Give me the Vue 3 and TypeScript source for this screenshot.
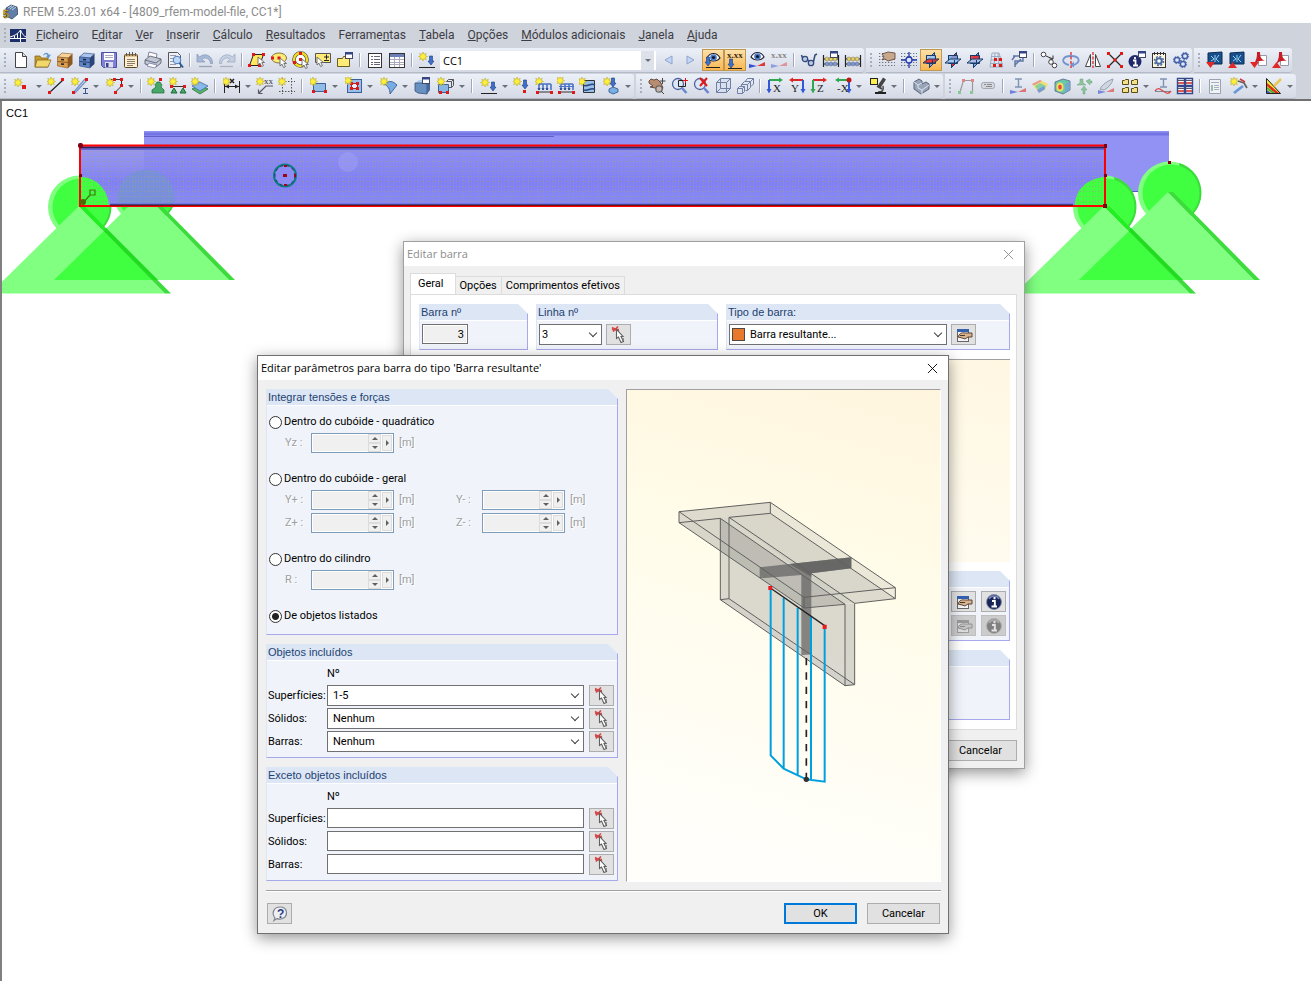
<script setup lang="ts">
import { ref } from 'vue'

interface Item {
  kind: 'button' | 'separator' | 'combo'
  icon: string
  label: string
  menu: boolean
  active: boolean
}

const b = (icon: string, label: string, active = false): Item => ({ kind: 'button', icon, label, menu: false, active })
const m = (icon: string, label: string): Item => ({ kind: 'button', icon, label, menu: true, active: false })
const sep: Item = { kind: 'separator', icon: '', label: '', menu: false, active: false }
const combo: Item = { kind: 'combo', icon: '', label: '', menu: false, active: false }

// Shared pieces of the toolbar glyphs
const star = (x = 0, y = 0) =>
  `<path transform="translate(${x} ${y})" d="M4 0l.9 2.400 2.400-1.100-1.100 2.300 2.300.9-2.300.9 1.100 2.300-2.400-1L4 9l-.9-2.300-2.400 1 1.100-2.300L-.5 4.500l2.300-.9L.7 1.300l2.400 1.100z" fill="#fff03c" stroke="#b0a020" stroke-width=".5"/>`
const node = (x: number, y: number, c = '#e01818') => `<rect x="${x}" y="${y}" width="3" height="3" fill="${c}"/>`
const down = (x: number, y: number, c = '#3c70cc') =>
  `<path transform="translate(${x} ${y})" d="M-1.500 0h3v5h1.500l-3 4-3-4h1.500z" fill="${c}" stroke="#1c3c7c" stroke-width=".6"/>`
const cursor = (x: number, y: number) =>
  `<path transform="translate(${x} ${y})" d="M0 0v8l2-1.800 1.600 3.300 1.800-.8L3.800 5.500h2.700z" fill="#fff" stroke="#666" stroke-width=".9"/>`
const windowGlyph = (x: number, y: number) =>
  `<g transform="translate(${x} ${y})"><rect x=".5" y=".5" width="7" height="6" fill="#fff" stroke="#444a66"/><path d="M0 1.500h8" stroke="#34448c" stroke-width="2"/></g>`
const lens = `<circle cx="8" cy="7" r="5.500" fill="#dbe8f8" stroke="#52629a" stroke-width="1.300"/><path d="M12 11l4.500 5" stroke="#6a88d0" stroke-width="2.600"/>`
const crate = (a: string, c: string, e: string) =>
  `<path d="M1.500 6L6 2l10.500 1L12 7z" fill="${a}" stroke="${e}" stroke-width=".6"/><path d="M1.500 6L12 7v10L1.500 15z" fill="${c}" stroke="${e}" stroke-width=".6"/><path d="M12 7l4.500-4v10L12 17z" fill="${e}"/><path d="M1.500 10.500l10.500 1" stroke="${e}"/><path d="M5 8.500l3 .3M5 13l3 .3" stroke="#222" stroke-width="1.500"/>`
const dots = `<path d="M1 2.500h16M1 5.500h16M1 8.500h16M1 11.500h16M1 14.500h16" stroke="#6b7280" stroke-width="1.200" stroke-dasharray="1.300 1.700"/>`
const planes = (flat: string, side: string, face: string) =>
  `<path d="M7.500 6.500l5-5v10l-5 5z" fill="${side}" stroke="#173a6a"/><path d="M4.500 4.500h9v8h-9z" fill="${face}" fill-opacity=".85" stroke="#173a6a"/><path d="M1 12l5-4h11l-5 4z" fill="${flat}" fill-opacity=".9" stroke="#173a6a"/><path d="M7.500 12v4.500l3-3V9M4.500 8V4.500h5" fill="none" stroke="#173a6a"/>`
const abacus = `<path d="M1.500 4v12M16.500 4v12M1 8h16M1 13h16" stroke="#222" stroke-width="1.200"/><g stroke="#555" stroke-width=".4"><circle cx="5" cy="8" r="2" fill="#e8d060"/><circle cx="9" cy="8" r="2" fill="#e8d060"/><circle cx="13" cy="8" r="2" fill="#e8d060"/><circle cx="5" cy="13" r="2" fill="#7c98d8"/><circle cx="9" cy="13" r="2" fill="#7c98d8"/><circle cx="13" cy="13" r="2" fill="#7c98d8"/></g>`
const eye = (x: number, y: number) =>
  `<g transform="translate(${x} ${y})"><path d="M0 5c3-6 10-6 13 0-3 4-10 4-13 0z" fill="#fff" stroke="#223" stroke-width="1.200"/><circle cx="6.500" cy="4.500" r="3.300" fill="#4c7cc8"/><circle cx="6.500" cy="4.500" r="1.600" fill="#101828"/></g>`
const wedge = (o = 1) => `<g opacity="${o}"><path d="M1 17v-4l8 2z" fill="#3850d0"/><path d="M9 15l8-4v4z" fill="#e03838"/></g>`
const xxx = (c: string) => `<text x="1" y="7" font-family="Liberation Serif, serif" font-size="9" font-weight="bold" fill="${c}">x.xx</text>`
const loads = `<path d="M4 7v6M8 7v6M12 7v6M16 7v6M4 7h12" stroke="#4c74c4" stroke-width="1.600" fill="none"/><path d="M3 11l1 2 1-2M7 11l1 2 1-2M11 11l1 2 1-2" stroke="#24448c" fill="none"/><path d="M2 15h15" stroke="#333"/>` + node(1, 14) + node(15, 14)
const axis = (h: string, v: string, t: string, flip = false) =>
  `<path d="${flip ? 'M15 3H4' : 'M3 3h11'}" stroke="${h}" stroke-width="2"/><path d="${flip ? 'M5 .5v5L1 3z' : 'M13 .5v5L17 3z'}" fill="${h}"/><path d="${flip ? 'M15 3v10' : 'M3 3v10'}" stroke="${v}" stroke-width="2"/><path d="${flip ? 'M12.500 12h5L15 16.500z' : 'M.5 12h5L3 16.500z'}" fill="${v}"/><text x="${flip ? 3 : 7}" y="15" font-family="Liberation Serif, serif" font-size="11" fill="#222">${t}</text>`
const beamI = `<path d="M6 2h7M9.500 2v8M6 10h7" stroke="#8094b4" stroke-width="1.400"/>`
const gear = (x: number, y: number) =>
  `<circle cx="${x}" cy="${y}" r="2.600" fill="#dfe8f8" stroke="#4460a8" stroke-width="1.500"/><circle cx="${x}" cy="${y}" r="3.600" fill="none" stroke="#4460a8" stroke-width="1" stroke-dasharray="1.400 1.400"/>`
const screen = `<path d="M2 2l14-1v12H2z" fill="#18508c" stroke="#0c2c54"/><path d="M5 5l3 3-3 2M13 4l-3 4 3 3M9 4v7" stroke="#9cd0f4" fill="none"/>`
const pdf = `<path d="M8.500 4.500h8v10h-8z" fill="#fff" stroke="#99a"/><path d="M7 1h3c0 5 1 7 5 9-4-1-8 0-11 3 3-5 3-8 3-12z" fill="#c81c24"/>`
const upTip = `<path d="M0 17h9l-4.500-6z" fill="#e02828"/>`
const downTip = `<path d="M0 11h9l-4.500 6z" fill="#e02828"/>`

const icons: Record<string, string> = {
  file: `<path d="M3.500 1.500h7l4 4v11h-11z" fill="#fff" stroke="#444"/><path d="M10.500 1.500v4h4" fill="#ddd" stroke="#444"/>`,
  open: `<path d="M1 5h5l1 2h7v9H1z" fill="#c79a2c" stroke="#7c5c14" stroke-width=".7"/><path d="M3 9h14l-3 7H1z" fill="#f2d86c" stroke="#7c5c14" stroke-width=".7"/><path d="M9 5c1-4 5-4 6-1l2-.5-2.500 4L12 5l1.500-.5C13 3 11 2.500 9 5z" fill="#5e94d0"/>`,
  crate: crate('#f4d49c', '#dca050', '#8a5820'),
  crateBlue: crate('#a8c4ec', '#5c84c8', '#2c4478'),
  save: `<path d="M1.500 1.500h15v15h-13l-2-2z" fill="#8080d4" stroke="#5050a0"/><rect x="4" y="2" width="10" height="7" fill="#fff"/><path d="M5 4.500h8M5 6.500h8" stroke="#aab"/><rect x="5" y="11" width="8" height="5.500" fill="#dde"/><rect x="6" y="12" width="2.500" height="4" fill="#404090"/>`,
  clip: `<rect x="2.500" y="3.500" width="13" height="13" rx="1" fill="#fcefd4" stroke="#5c4420"/><path d="M3 4.500h12" stroke="#c89c5c" stroke-width="2"/><path d="M4.500 2v3M7.500 1v4M10.500 1v4M13.500 2v3" stroke="#555"/><path d="M5 8.500h8M5 10.500h8M5 12.500h8M5 14.500h6" stroke="#8b7c64"/>`,
  print: `<path d="M5 1l8 2-1 5-8-2z" fill="#fff" stroke="#668" stroke-width=".8"/><path d="M1 9l5-4 11 3v4l-5 4L1 13z" fill="#c0c8d6" stroke="#556" stroke-width=".8"/><path d="M1 9l11 3 5-4" fill="none" stroke="#556" stroke-width=".8"/><path d="M5 12l8 2-2 3-8-2z" fill="#fff" stroke="#77a" stroke-width=".8"/>`,
  preview: `<path d="M2.500 1.500h9l3 3v12h-12z" fill="#eef1f8" stroke="#555"/><path d="M4 4.500h6M4 7.500h4M4 10.500h4M4 13.500h6" stroke="#99a"/><circle cx="11" cy="9" r="3.800" fill="#bcd8f8" stroke="#4c7cb8"/><path d="M13.500 12l3.500 4.500" stroke="#2c5ca0" stroke-width="2"/>`,
  undo: `<path d="M1 3v8h8L6 8.500c3-3 8-1 8.500 4h2C17 5 9 1 3.500 6z" fill="#a6b8d6" stroke="#8496b4" stroke-width=".7"/><path d="M3 15.500h13" stroke="#98a4b8" stroke-width="1.300"/>`,
  redo: `<path d="M17 3v8H9l3-2.500c-3-3-8-1-8.500 4h-2C1 5 9 1 14.500 6z" fill="#c4d0e2" stroke="#98a6bc" stroke-width=".7"/><path d="M2 15.500h13" stroke="#a8b2c2" stroke-width="1.300"/>`,
  para: `<path d="M5.500 3.500h10l-4 11h-10z" fill="#ffe860" stroke="#222"/>` + node(4, 2) + node(14, 2) + node(0, 13) + node(10, 13) + cursor(10, 6),
  ellipse: `<ellipse cx="9" cy="7" rx="7.500" ry="5" fill="#ffec78" stroke="#665c20" stroke-width=".8"/>` + node(7.500, 5.500) + node(1, 5.500) + cursor(10, 7),
  ring: `<circle cx="8.500" cy="8.500" r="6.500" fill="#fff" stroke="#444" stroke-width="3.600"/><circle cx="8.500" cy="8.500" r="6.500" fill="none" stroke="#f4dc20" stroke-width="2.400"/>` + node(7, 7) + node(7, 1) + node(1, 10) + cursor(10, 8),
  pm: `<path d="M1.500 2.500h15v9h-15z" fill="#ffec78" stroke="#555"/><path d="M10 6h5M12.500 3.500v5M10 9.500h5" stroke="#222"/>` + cursor(3, 6),
  folder: `<path d="M1.500 7.500h5l1-2h6v10h-12z" fill="#ffec78" stroke="#6b5c20"/>` + windowGlyph(9, 1),
  list: `<rect x="2.500" y="2.500" width="13" height="14" fill="#fff" stroke="#333"/><path d="M5 5.500h2M8 5.500h6M5 8.500h2M8 8.500h6M5 11.500h2M8 11.500h6M5 13.500h2M8 13.500h6" stroke="#667"/>`,
  table: `<rect x="1.500" y="2.500" width="15" height="14" fill="#fff" stroke="#333"/><path d="M2 4.500h14" stroke="#6c80b8" stroke-width="3"/><path d="M2 8.500h14M2 11.500h14M2 13.500h14M6.500 6v10M11.500 6v10" stroke="#aab"/>`,
  load: star(1, 1) + down(13, 5) + `<path d="M1 16.500h16" stroke="#222"/>`,
  prev: `<path d="M12 5v8L5 9z" fill="#c4d6f4" stroke="#8ca6d0"/>`,
  next: `<path d="M5 5v8l7-4z" fill="#c4d6f4" stroke="#8ca6d0"/>`,
  eyeload: eye(3, 2) + down(4, 6) + `<path d="M2 16.500h14" stroke="#222"/>`,
  xload: xxx('#3a2c14') + down(5, 8) + `<path d="M2 17.500h14" stroke="#222"/>`,
  eyewedge: eye(3, 1) + wedge(),
  xwedge: xxx('#888') + wedge(0.45),
  glasses: `<g fill="#b8cce8" stroke="#34487c" stroke-width="1.300"><circle cx="5" cy="8" r="2.700"/><circle cx="11" cy="12" r="2.700"/></g><path d="M2.500 7L1.500 4M13.500 10.500L15 4l2-1M7.500 9l1.500 1" stroke="#34487c" stroke-width="1.500" fill="none"/>`,
  abacusWin: abacus + windowGlyph(8, 0),
  abacus,
  handdots: dots + `<path d="M4 3l6-2 7 1v6l-7 2-3-2-3 1 2-3z" fill="#c8a88c" stroke="#5c4030" stroke-width=".8"/>`,
  stardots: dots + `<path d="M9 1v16M1 9h16" stroke="#2038a8" stroke-width="1.300"/><circle cx="9" cy="9" r="3" fill="#dfe6ff" stroke="#2038a8" stroke-width="1.300"/>`,
  plane1: planes('#f02828', '#78a8e4', '#a8cdf4'),
  plane2: planes('#a8cdf4', '#f02828', '#78a8e4'),
  plane3: planes('#a8cdf4', '#78a8e4', '#f02828'),
  grid: `<path d="M4 2h7l4 14H2zM3 9h11M7 2l-1 14M10 2l1 14M3.500 5.500h9M2.500 12.500h12" fill="none" stroke="#8ca0b8" stroke-width=".8"/>` + node(6, 7) + node(11, 7) + node(5, 13) + node(11, 13),
  snapwin: `<path d="M3 5h10v5H5v6M2 9l3-4M5 14l6-6" stroke="#6078a8" stroke-width="1.500" fill="none"/>` + windowGlyph(9, 0),
  copy: `<g fill="#fff" stroke="#444"><circle cx="3.500" cy="3.500" r="2.300"/><circle cx="11" cy="11" r="2.300"/><circle cx="14.500" cy="14.500" r="2.300"/></g><path d="M6 5l7 3M13 8V4.500M13 8H9.500" stroke="#333" fill="none"/>`,
  rotate: `<path d="M7 14C-2 12 0 5 9 5s10 6 3 9" stroke="#7494d0" stroke-width="1.800" fill="none"/><path d="M12 10.500v6l-4-2.500z" fill="#7494d0"/><path d="M9 1v16" stroke="#e01818" stroke-width="1.200" stroke-dasharray="3 1.500"/>`,
  mirror: `<path d="M6.500 3.500v12h-5zM11.500 3.500v12h5z" fill="#fff" stroke="#444"/><path d="M9 1v16" stroke="#e01818" stroke-width="1.200" stroke-dasharray="3 1.500"/>`,
  cross: `<path d="M3 3l12 12M15 3L3 15" stroke="#222" stroke-width="1.200"/>` + node(1, 1) + node(14, 1) + node(1, 14) + node(14, 14) + node(7.500, 7.500),
  infoWin: `<circle cx="7" cy="10.500" r="6.500" fill="#20286c"/><path d="M7 6v2M5 9.500h2.500V14M5 14.500h5" stroke="#fff" stroke-width="1.800"/>` + windowGlyph(10, 0),
  gearfile: `<rect x="2.500" y="2.500" width="13" height="14" fill="#fff6e0" stroke="#333"/><path d="M4.500 4V1M7.500 4V1M10.500 4V1M13.500 4V1" stroke="#333"/><circle cx="9" cy="10" r="2.800" fill="#fff" stroke="#4c6ca0" stroke-width="2"/><circle cx="9" cy="10" r="4.500" fill="none" stroke="#4c6ca0" stroke-width="1.500" stroke-dasharray="2 1.500"/>`,
  gears: gear(5, 9) + gear(13, 5) + gear(11, 13),
  screenDown: screen + downTip,
  screenUp: screen + upTip,
  pdfDown: pdf + downTip,
  pdfUp: pdf + upTip,
  point: star(0, 1) + `<rect x="8" y="8" width="4" height="4" fill="#e01818"/>`,
  line: `<path d="M2 16L16 3" stroke="#222" stroke-width="1.200"/>` + star(0, 0) + node(14, 1) + node(1, 14),
  member: `<path d="M2 16L14 2M4 16L16 3" stroke="#7494c8" stroke-width="1.200"/>` + star(0, 0) + node(14, 1) + node(1, 14) + `<path d="M12 11.500h5M14.500 11v5M12 16.500h5" stroke="#3c5488"/>`,
  poly: `<path d="M5 2.500h10.500V9l-6 6" stroke="#333" fill="none"/>` + star(0, 1) + node(7, 1) + node(14, 1) + node(14, 7) + node(8, 14),
  support: star(0, 0) + node(12, 1) + `<path d="M8 8l2-3h3l2 3-1 2 3 3v3H5v-3l4-3z" fill="#48a868" stroke="#1c6838" stroke-width=".7"/>`,
  support2: `<path d="M3 9.500h13" stroke="#333"/>` + star(0, 0) + node(1, 8) + node(14, 8) + `<path d="M5 11l3 5H2zM14 11l3 5h-6z" fill="#48a868" stroke="#1c6838"/>`,
  surf: `<path d="M1 12l8-4 8 4-8 5z" fill="#58b868" stroke="#206030" stroke-width=".7"/><path d="M1 9l8-4 8 4-8 5z" fill="#88b8ec" stroke="#3c6098" stroke-width=".7"/>` + star(0, 0),
  dim: `<path d="M1.500 4v12M16.500 4v12M2 9.500h14" stroke="#222"/><path d="M2 9.500l4-2v4zM16 9.500l-4-2v4z" fill="#222"/><path d="M7 2l4 4M11 2L7 6" stroke="#222" stroke-width="1.500"/>` + star(-1, 0),
  note: star(0, 0) + `<text x="8" y="7" font-family="Liberation Serif, serif" font-size="9" fill="#333">xx</text><path d="M17 9h-7l-7 7M2.500 16.500v-4M2.500 16.500h4" stroke="#556" stroke-width="1.200" fill="none"/>`,
  guide: `<path d="M4.500 1v16M13.500 1v16M1 4.500h16M1 14.500h16" stroke="#555" stroke-dasharray="1.500 1.500"/>` + star(0, 0),
  rect: `<path d="M3.500 6.500h12v8h-12z" fill="#90bce8" stroke="#3c6098"/>` + star(-1, 0) + node(14, 13) + node(2, 13),
  opening: `<rect x="2.500" y="2.500" width="14" height="13" fill="#98c0ec" stroke="#3c6098"/><rect x="6.500" y="6.500" width="6" height="5" fill="#e8eef8" stroke="#b02020"/>` + node(5, 5) + node(11, 5) + node(5, 10) + node(11, 10) + star(-1, -1),
  sector: `<path d="M4 7c5-4 9-3 13 1l-7 9C10 12 8 9 4 7z" fill="#78ace4" stroke="#2c5088" stroke-width=".8"/>` + star(0, 0),
  box: `<path d="M2 6l4-3h11l-3 3z" fill="#b0ccec"/><path d="M2 6h12v11l-9-1-3-2z" fill="#6890c0" stroke="#34507c" stroke-width=".8"/><path d="M14 6l3-3v10l-3 4z" fill="#44689c"/>` + windowGlyph(9, 0),
  boxes: `<path d="M1.500 7.500h10v8h-10z" fill="#88b4e4" stroke="#3c6098"/><path d="M9.500 4.500l2-2h5v6l-2 2h-3M9.500 4.500h5v6M14.500 4.500l2-2" fill="none" stroke="#555"/>` + star(0, 0) + node(9, 14) + node(2, 14),
  nodeload: star(0, 0) + down(12, 3) + node(10, 13),
  lineload: star(0, 0) + loads,
  memload: loads + star(-1, -1) + `<path d="M2 9.500h15" stroke="#4c74c4"/>`,
  surfload: `<path d="M4.500 3.500h11v12h-11z" fill="#98c0ec" stroke="#333"/><path d="M4 8c4 3 8-3 12 0M4 12.500c4 3 8-3 12 0" fill="none" stroke="#28457e" stroke-width="1.400"/>` + star(-1, 0),
  freeload: star(0, 0) + down(10, 1) + `<path d="M6 12l4-2 5 2v3l-5 2-4-2z" fill="#78b0e4" stroke="#2c5088" stroke-width=".8"/>`,
  pan: `<path d="M1 4l2-2 3 1 3-1 4 4 2 5-3 4-5-4-5-1 3-1-4-3z" fill="#b88c70" stroke="#4c3424" stroke-width=".8"/><circle cx="11" cy="12" r="3.200" fill="#e4e8f0" fill-opacity=".5" stroke="#666" stroke-width="1.300"/><path d="M14.500 1v6M11.500 4h6M13 14l3 3" stroke="#444"/>`,
  zoomWin: lens + `<path d="M8.500 3.500h7v6h-7z" fill="none" stroke="#222"/><path d="M15.500 1v5M13 3.500h5" stroke="#e01818"/>`,
  zoomDel: lens + `<path d="M8 1l7 8M15 1L8 9" stroke="#e01818" stroke-width="2"/>`,
  cube: `<path d="M2.500 5.500l4-4h10v10l-4 4h-10zM2.500 5.500h10v10M12.500 5.500l4-4M6.500 1.500v10l-4 4M6.500 11.500h10" fill="#d4dcec" fill-opacity=".6" stroke="#7080a4"/>`,
  cubes: `<path d="M1.500 11.500h5v5h-5zM1.500 11.500l2-2h5v5l-2 2M6.500 11.500l2-2" fill="#dfe5f0" stroke="#7080a4"/><path d="M9.500 13.500h2v-6h-6v2M5.500 7.500l3-3h6v6l-3 3M11.500 7.500l3-3M15 9.500l2.500-2.500V1.500h-6l-2 2.500M14.500 4.500l3-3" fill="none" stroke="#7080a4"/>`,
  ax: axis('#30a850', '#3058d8', 'X'),
  ay: axis('#d82828', '#3058d8', 'Y', true),
  az: axis('#d82828', '#30a850', 'Z'),
  axn: axis('#30a850', '#3058d8', '-X', true) + `<circle cx="15" cy="3" r="2.500" fill="#c01818"/>`,
  scope: `<rect x="1.500" y="1.500" width="7" height="6" fill="#ffee50" stroke="#222"/><path d="M15.500 1.500L10 10" stroke="#444" stroke-width="3.500"/><path d="M8 9l5 3" stroke="#444" stroke-width="2"/><path d="M9 15c4 0 6-1 5-6" stroke="#444" stroke-width="1.500" fill="none"/><path d="M6 16h11" stroke="#222" stroke-width="2"/>`,
  solid: `<path d="M2 5l5-3 3 2v3l4-2 3 2v5l-8 5-7-5z" fill="#98a4b8" stroke="#58647c"/><path d="M2 5l4 3v3l4 2 7-5M10 13v4M6 8l4-2" fill="none" stroke="#dde3ee"/>`,
  frame: `<path d="M3 15L6.500 3.500h9v12" fill="none" stroke="#999" stroke-width="1.200"/>` + node(5, 2, '#e08888') + node(14, 2, '#e08888') + node(1, 14, '#88c898') + node(13, 14, '#88c898'),
  tag: `<rect x="2.500" y="5.500" width="13" height="6" rx="2" fill="#d4d8de" stroke="#a4a8b0"/><path d="M5 7.500h2M8 7.500h5M7 9.500h6" stroke="#888"/>`,
  beamw: beamI + wedge(0.65),
  rainbow: `<path d="M1 7l8-4 8 4-3 6-6 3z" fill="#f0e070"/><path d="M4 9l5-3 6 3-2 4-5 2z" fill="#88d0a0"/><path d="M1 7l8-4 2 1-8 4.500z" fill="#e89898"/><path d="M6 13l7-4 1 3-6 4z" fill="#7898e0"/>`,
  isobox: `<path d="M2 5l8-3 7 2v9l-7 4-8-3z" fill="#68c8a8" stroke="#568" stroke-width=".8"/><ellipse cx="7" cy="10" rx="3.500" ry="4.500" fill="#f0e060"/><ellipse cx="7" cy="10" rx="1.800" ry="2.500" fill="#e84838"/><path d="M12 16V7l5-3v9z" fill="#78a0d8" fill-opacity=".7"/>`,
  react: `<path d="M5 2h3v4l3 2H2l3-2zM11 4l4-2v2h2v2h-2v2zM8 17v-4H6l3-4 3 4h-2v4z" fill="#8cc49c" stroke="#6ca47c" stroke-width=".5"/>`,
  pencilw: `<path d="M3 12c2-4 7-8 13-10-1 5-5 9-9 11z" fill="#d0d6e0" stroke="#98a2b2"/>` + wedge(0.6),
  folders: `<g fill="#f4e088" stroke="#5c4c14"><path d="M1.500 3.500h2l1-1h3v5h-6zM10.500 3.500h2l1-1h3v5h-6zM1.500 11.500h2l1-1h3v5h-6zM10.500 11.500h2l1-1h3v5h-6z"/></g>`,
  beams: beamI + `<path d="M1 14.500h16" stroke="#789"/><path d="M1 14c3-4 5-2 8 0s5 4 8 0" fill="none" stroke="#d84848" stroke-width="1.300"/>`,
  panels: `<g fill="#fff" stroke="#34488c" stroke-width="1.400"><path d="M1.500 1.500h7v7h-7zM9.500 1.500h7v7h-7zM1.500 9.500h7v7h-7zM9.500 9.500h7v7h-7z"/></g><path d="M2 6h6M10 6h6M2 14h6M10 14h6" stroke="#d02828" stroke-width="1.300"/><path d="M2 3.500h6M10 3.500h6M2 11.500h6M10 11.500h6" stroke="#556"/>`,
  report: `<path d="M3.500 2.500h11v14h-11z" fill="#f0f2f6" stroke="#9aa2b0"/><path d="M5 5.500h8M8 8.500h5M8 10.500h5M8 12.500h5" stroke="#a8b0c0"/><path d="M5 8h2v6H5z" fill="#98c0a8"/>`,
  tools: star(0, 0) + `<path d="M4 16L13 9" stroke="#6898d8" stroke-width="2.800"/><path d="M8 4l6 2 3 5" fill="none" stroke="#666" stroke-width="1.800"/><path d="M10 2l5 3" stroke="#d03838" stroke-width="1.500"/>`,
  colors: `<path d="M1.500 1.500v15h14z" fill="#f8e828" stroke="#222"/><path d="M2 6v3l8 7h4z" fill="#e02828"/><path d="M2 10v2l5 4h3z" fill="#38b038"/><path d="M2 13v3h4z" fill="#3858d8"/><path d="M9 9l7-7" stroke="#e8c858" stroke-width="2.500"/>`,
  pick: `<path d="M2 1.500l7 4M3 5.500l5-5M2 3.500h7" stroke="#d84848" stroke-width="1.600"/><path d="M6.500 3.500v9l2-1.500 2.500 5.500 2.500-1-2.500-5h2z" fill="#fff" stroke="#606060" stroke-width="1.100"/><path d="M13 12v3" stroke="#777" stroke-width="1.500"/>`,
  edit: `<rect x="2.500" y="3.500" width="11" height="12" fill="#f4f4f4" stroke="#666"/><path d="M2 4.500h12" stroke="#3460b0" stroke-width="3"/><path d="M4 9c2-3 5-2 7-2h6v4h-4l-3 2-3-1-4-1z" fill="#d8b490" stroke="#4c3828" stroke-width=".9"/><path d="M5 9.500h5" stroke="#4c3828"/>`,
  info: `<circle cx="9" cy="9" r="7.500" fill="#182458" stroke="#8890a8"/><path d="M4 6c2-4 8-4 10 0" stroke="#7888c0" stroke-width="1.500" fill="none"/><path d="M9.500 4v2.300M7 8h2.800v5M6.500 13.500h5.500" stroke="#fff" stroke-width="2"/>`,
  help: `<path d="M3 15.500L4 13C0 8 3 2 9 2c8 0 9 10 1 12-2 .4-3 0-4-.4z" fill="#eceff5" stroke="#80848c" stroke-width="1.200"/><text x="6" y="12.500" font-family="Liberation Sans, sans-serif" font-size="12" font-weight="bold" fill="#2c3c7c">?</text>`,
}

const menus: [string, string, string][] = [
  ['', 'F', 'icheiro'], ['E', 'd', 'itar'], ['', 'V', 'er'], ['', 'I', 'nserir'], ['', 'C', 'álculo'],
  ['', 'R', 'esultados'], ['Ferrame', 'n', 'tas'], ['', 'T', 'abela'], ['', 'O', 'pções'],
  ['', 'M', 'ódulos adicionais'], ['', 'J', 'anela'], ['', 'A', 'juda'],
]

const toolbars: Item[][][] = [
  [
    [
      b('file', 'Novo'), b('open', 'Abrir'), b('crate', 'Bloco'), b('crateBlue', 'Guardar bloco'), b('save', 'Guardar'),
      b('clip', 'Dados gerais'), b('print', 'Imprimir'), b('preview', 'Pré-visualizar'), sep,
      b('undo', 'Desfazer'), b('redo', 'Refazer'), sep,
      b('para', 'Seleção losango'), b('ellipse', 'Seleção elipse'), b('ring', 'Seleção anel'), b('pm', 'Seleção especial'), b('folder', 'Grupos'), sep,
      b('list', 'Navegador'), b('table', 'Tabelas'), sep, b('load', 'Casos de carga'), combo,
      b('prev', 'Anterior'), b('next', 'Seguinte'), b('eyeload', 'Mostrar cargas', true), b('xload', 'Valores das cargas', true),
      b('eyewedge', 'Mostrar resultados'), b('xwedge', 'Valores dos resultados'), sep,
      b('glasses', 'Verificar'), b('abacusWin', 'Calcular seleção'), b('abacus', 'Calcular tudo'),
    ],
    [
      b('handdots', 'Plano de trabalho'), b('stardots', 'Grelha'), b('plane1', 'Plano XY', true), b('plane2', 'Plano YZ'),
      b('plane3', 'Plano XZ'), b('grid', 'Malha'), b('snapwin', 'Encaixe'), sep,
      b('copy', 'Copiar'), b('rotate', 'Rodar'), b('mirror', 'Espelhar'), b('cross', 'Intersetar'),
      b('infoWin', 'Informação'), b('gearfile', 'Propriedades'), b('gears', 'Configuração'),
    ],
    [b('screenDown', 'Importar'), b('screenUp', 'Exportar'), b('pdfDown', 'Importar PDF'), b('pdfUp', 'Exportar PDF')],
  ],
  [
    [
      m('point', 'Nó'), b('line', 'Linha'), m('member', 'Barra'), m('poly', 'Polilinha'), sep,
      b('support', 'Apoio nodal'), b('support2', 'Apoio de linha'), b('surf', 'Apoio de superfície'), sep,
      m('dim', 'Cota'), b('note', 'Comentário'), b('guide', 'Linha guia'), sep,
      m('rect', 'Superfície'), m('opening', 'Abertura'), m('sector', 'Superfície curva'), b('box', 'Sólido'), m('boxes', 'Conjunto'), sep,
      m('load', 'Carga'), b('nodeload', 'Carga nodal'), b('lineload', 'Carga de linha'), b('memload', 'Carga de barra'),
      b('surfload', 'Carga de superfície'), m('freeload', 'Carga livre'),
    ],
    [
      b('pan', 'Mover vista'), b('zoomWin', 'Ampliar janela'), b('zoomDel', 'Vista anterior'), b('cube', 'Vista isométrica'), b('cubes', 'Perspetiva'), sep,
      b('ax', 'Vista X'), b('ay', 'Vista Y'), b('az', 'Vista Z'), m('axn', 'Vista -X'), m('scope', 'Visibilidade'), sep, m('solid', 'Modo de exibição'),
    ],
    [
      b('frame', 'Deformação'), b('tag', 'Rótulos'), sep,
      b('beamw', 'Esforços na barra'), b('rainbow', 'Esforços na superfície'), b('isobox', 'Tensões no sólido'), b('react', 'Reações'),
      b('pencilw', 'Secção'), m('folders', 'Janelas'), b('beams', 'Diagrama'), b('panels', 'Painéis'), sep,
      b('report', 'Relatório'), m('tools', 'Ferramentas'), m('colors', 'Cores'),
    ],
  ],
]

type Field = { id: string; label: string }
const modes: { id: string; label: string; rows: Field[][] }[] = [
  { id: 'quad', label: 'Dentro do cubóide - quadrático', rows: [[{ id: 'yz', label: 'Yz :' }]] },
  {
    id: 'geral',
    label: 'Dentro do cubóide - geral',
    rows: [
      [{ id: 'yp', label: 'Y+ :' }, { id: 'ym', label: 'Y- :' }],
      [{ id: 'zp', label: 'Z+ :' }, { id: 'zm', label: 'Z- :' }],
    ],
  },
  { id: 'cilindro', label: 'Dentro do cilindro', rows: [[{ id: 'r', label: 'R :' }]] },
  { id: 'lista', label: 'De objetos listados', rows: [] },
]
const mode = ref('lista')
const loadCase = ref('CC1')
const included = [
  { id: 'inc-sup', label: 'Superfícies:', value: '1-5' },
  { id: 'inc-sol', label: 'Sólidos:', value: 'Nenhum' },
  { id: 'inc-bar', label: 'Barras:', value: 'Nenhum' },
]
const excluded = [
  { id: 'exc-sup', label: 'Superfícies:' },
  { id: 'exc-sol', label: 'Sólidos:' },
  { id: 'exc-bar', label: 'Barras:' },
]
// Horizontal placement of the two beam ends; each carries a front and a rear support
const supports = [0, 1025]
</script>

<template>
  <div class="app">
    <header class="titlebar">
      <svg class="logo" viewBox="0 0 16 16" aria-hidden="true">
        <path d="M4 4l5-3 6 2 1 7-6 5-6-3z" fill="#5f7fa8" stroke="#26384f" stroke-width=".7" />
        <path d="M6 4l4-2.500M8 5l4-3M10 6l4-3" stroke="#b9d0ea" />
        <text x="1" y="14" font-family="Liberation Sans, sans-serif" font-size="11" font-weight="bold" fill="#f6c830" stroke="#4c3a08" stroke-width=".5">5</text>
      </svg>
      <span>RFEM 5.23.01 x64 - [4809_rfem-model-file, CC1*]</span>
    </header>

    <nav class="menubar">
      <span class="grip"></span>
      <svg class="doc" viewBox="0 0 16 13" aria-hidden="true">
        <rect width="16" height="13" fill="#1d2f6b" />
        <path d="M0 9.500h16M10.500 1v12M0 8c4-1 8-3 10.500-7C12 5 14 7 16 8M4.500 7v3M7.500 5v5" fill="none" stroke="#fff" />
      </svg>
      <button v-for="w in menus" :key="w.join('')" type="button">{{ w[0] }}<u>{{ w[1] }}</u>{{ w[2] }}</button>
    </nav>

    <div class="toolbars">
      <div v-for="(row, r) in toolbars" :key="r" class="toolrow">
        <div v-for="(group, g) in row" :key="g" class="toolgroup">
          <span class="grip"></span>
          <template v-for="(item, i) in group" :key="i">
            <span v-if="item.kind === 'separator'" class="sep"></span>
            <span v-else-if="item.kind === 'combo'" class="combo">
              <select v-model="loadCase" aria-label="Caso de carga"><option>CC1</option></select>
              <i></i>
            </span>
            <button v-else type="button" class="tool" :class="{ active: item.active, menu: item.menu }" :aria-label="item.label">
              <svg viewBox="0 0 18 18" v-html="icons[item.icon]"></svg>
              <i v-if="item.menu"></i>
            </button>
          </template>
        </div>
      </div>
    </div>

    <main class="canvas">
      <span class="case">CC1</span>
      <svg class="model" viewBox="2 101 1309 880" aria-hidden="true">
        <defs>
          <linearGradient id="face" x1="0" y1="0" x2="0" y2="1">
            <stop offset="0" stop-color="#8f8ff4" />
            <stop offset=".6" stop-color="#8080f4" />
            <stop offset="1" stop-color="#8a8af4" />
          </linearGradient>
          <linearGradient id="fade" x1="0" y1="0" x2="0" y2="1">
            <stop offset="0" stop-color="#9898ee" />
            <stop offset="1" stop-color="#9090f2" stop-opacity="0" />
          </linearGradient>
          <pattern id="mesh" width="15" height="10" patternUnits="userSpaceOnUse">
            <path d="M0 1.500h15M0 6.500h15" stroke="#a0a088" stroke-dasharray="1 2" />
            <path d="M3.500 0v10M13.500 0v10" stroke="#a0a088" stroke-dasharray="1 2" opacity=".5" />
          </pattern>
        </defs>
        <path d="M144 131h1025v61H144z" fill="#9292f4" />
        <path d="M144 134h1025" stroke="#7474e4" stroke-width="3" />
        <path d="M144 136.500h410" stroke="#6060c8" />
        <path d="M1105 191.500h64" stroke="#5858c0" />
        <g v-for="x in supports" :key="x" :transform="`translate(${x})`">
          <circle cx="144.500" cy="193" r="31.500" fill="#80ff80" />
          <path d="M154 163a31 31 0 0 1 15 50l-8 6z" fill="#3cdc3c" />
          <circle cx="146" cy="193" r="28.500" fill="#40ff40" />
          <path d="M143 192L54 280h175z" fill="#80ff80" />
          <path d="M143 192h5l87 88h-6z" fill="#3cdc3c" />
          <circle cx="79.500" cy="207" r="31.500" fill="#80ff80" />
          <path d="M89 177a31 31 0 0 1 15 50l-8 6z" fill="#3cdc3c" />
          <circle cx="81" cy="207" r="28.500" fill="#40ff40" />
          <path d="M79 206L-10 293.500h175z" fill="#80ff80" />
          <path d="M104 231L54 280h99z" fill="#40ff40" />
          <path d="M79 206h5l87 87.500h-6z" fill="#3cdc3c" />
          <path d="M104 231l49 49h5l-52-52z" fill="#1fdc1f" />
          <path d="M79 206h5l20 21v4z" fill="#20f020" />
        </g>
        <path d="M80 146h1025v60H80z" fill="url(#face)" />
        <path d="M80 149h64v32H80z" fill="url(#fade)" />
        <path d="M118 206a29 29 0 1 1 56 0z" fill="#7890dc" />
        <path d="M80 177c16 0 28 12 29 29H80zM1105 177v29h-30c0-16 12-28 30-29z" fill="#40ff40" />
        <path d="M80 150h1025v54H80z" fill="url(#mesh)" opacity=".7" />
        <circle cx="348" cy="162" r="10" fill="#a0a0f4" opacity=".5" />
        <path d="M80 147.500h1025" stroke="#30205c" stroke-width="2" />
        <path d="M80 149.500h1025M110 204h963" stroke="#6464dc" />
        <path d="M80 145.500h1025v60.500H80z" fill="none" stroke="#f00" stroke-width="2" />
        <path d="M110 205h963" stroke="#101020" />
        <g fill="#800010">
          <rect x="78" y="143" width="5" height="5" rx="2" />
          <rect x="79" y="174" width="3" height="3" />
          <rect x="1104" y="144" width="3" height="4" />
          <rect x="1104" y="174" width="3" height="3" />
          <rect x="1103" y="204" width="4" height="4" />
          <rect x="1168" y="161" width="3" height="3" />
        </g>
        <path d="M83 203l7-8M90 190h5v5h-5z" fill="none" stroke="#3c7c10" stroke-width="1.200" />
        <circle cx="83" cy="202" r="3" fill="#4c6c08" />
        <circle cx="285" cy="175.500" r="11" fill="#8c8cf4" stroke="#0c7c80" stroke-width="2" />
        <circle cx="285" cy="175.500" r="10" fill="none" stroke="#202050" stroke-dasharray="3 3" stroke-width=".8" />
        <path d="M283 174h4v3h-4zM284 165h3v2h-3zM284 184h3v2h-3zM294 174h2v3h-2z" fill="#980818" />
      </svg>

      <section class="window back" aria-label="Editar barra">
        <div class="caption">
          <span>Editar barra</span>
          <button type="button" class="close" aria-label="Fechar"><svg viewBox="0 0 12 12"><path d="M1 1l10 10M11 1L1 11" stroke="currentColor" fill="none" /></svg></button>
        </div>
        <div class="tabs" role="tablist">
          <button type="button" role="tab" aria-selected="true" class="selected">Geral</button>
          <button type="button" role="tab" aria-selected="false">Opções</button>
          <button type="button" role="tab" aria-selected="false">Comprimentos efetivos</button>
        </div>
        <div class="pane">
          <div class="heads">
            <div class="group">
              <label class="head" for="bar-no">Barra nº</label>
              <div class="line"><input id="bar-no" class="number" value="3" readonly /></div>
            </div>
            <div class="group">
              <label class="head" for="line-no">Linha nº</label>
              <div class="line">
                <span class="drop short"><select id="line-no"><option>3</option></select></span>
                <button type="button" class="square" aria-label="Selecionar linha"><svg viewBox="0 0 18 18" v-html="icons.pick"></svg></button>
              </div>
            </div>
            <div class="group">
              <label class="head" for="bar-type">Tipo de barra:</label>
              <div class="line">
                <span class="drop swatch"><select id="bar-type"><option>Barra resultante...</option></select></span>
                <button type="button" class="square" aria-label="Editar tipo"><svg viewBox="0 0 18 18" v-html="icons.edit"></svg></button>
              </div>
            </div>
          </div>
          <div class="preview"></div>
          <div class="group side">
            <div class="head"></div>
            <div class="pairs">
              <button type="button" class="square" aria-label="Editar"><svg viewBox="0 0 18 18" v-html="icons.edit"></svg></button>
              <button type="button" class="square" aria-label="Informação"><svg viewBox="0 0 18 18" v-html="icons.info"></svg></button>
              <button type="button" class="square" disabled aria-label="Editar"><svg viewBox="0 0 18 18" v-html="icons.edit"></svg></button>
              <button type="button" class="square" disabled aria-label="Informação"><svg viewBox="0 0 18 18" v-html="icons.info"></svg></button>
            </div>
          </div>
          <div class="group side"><div class="head"></div></div>
        </div>
        <div class="actions"><button type="button" class="push">Cancelar</button></div>
      </section>

      <section class="window front" aria-label="Editar parâmetros">
        <div class="caption">
          <span>Editar parâmetros para barra do tipo 'Barra resultante'</span>
          <button type="button" class="close" aria-label="Fechar"><svg viewBox="0 0 12 12"><path d="M1 1l10 10M11 1L1 11" stroke="currentColor" fill="none" /></svg></button>
        </div>
        <div class="content">
          <div class="forms">
            <div class="group integrate">
              <div class="head">Integrar tensões e forças</div>
              <div v-for="o in modes" :key="o.id" class="mode">
                <label class="choice"><input v-model="mode" type="radio" name="mode" :value="o.id" />{{ o.label }}</label>
                <div v-for="(row, i) in o.rows" :key="i" class="fields">
                  <div v-for="f in row" :key="f.id" class="field">
                    <label :for="f.id">{{ f.label }}</label>
                    <span class="spin">
                      <input :id="f.id" type="text" disabled />
                      <span class="steps">
                        <button type="button" disabled aria-label="Aumentar"><i class="up"></i></button>
                        <button type="button" disabled aria-label="Diminuir"><i class="dn"></i></button>
                      </span>
                      <button type="button" class="more" disabled aria-label="Mais"><i class="rt"></i></button>
                    </span>
                    <span>[m]</span>
                  </div>
                </div>
              </div>
            </div>

            <div class="group objects">
              <div class="head">Objetos incluídos</div>
              <div class="rows">
                <span class="no">Nº</span>
                <template v-for="o in included" :key="o.id">
                  <label :for="o.id">{{ o.label }}</label>
                  <span class="drop"><select :id="o.id"><option>{{ o.value }}</option></select></span>
                  <button type="button" class="square" aria-label="Selecionar"><svg viewBox="0 0 18 18" v-html="icons.pick"></svg></button>
                </template>
              </div>
            </div>

            <div class="group objects">
              <div class="head">Exceto objetos incluídos</div>
              <div class="rows">
                <span class="no">Nº</span>
                <template v-for="o in excluded" :key="o.id">
                  <label :for="o.id">{{ o.label }}</label>
                  <input :id="o.id" type="text" />
                  <button type="button" class="square" aria-label="Selecionar"><svg viewBox="0 0 18 18" v-html="icons.pick"></svg></button>
                </template>
              </div>
            </div>
          </div>

          <div class="picture">
            <svg viewBox="7 -270 939 1473" preserveAspectRatio="xMidYMid meet" aria-hidden="true">
              <g fill="#68686c">
                <path d="M163 95L437 67 812 323 538 352z" fill-opacity=".13" />
                <path d="M163 128L437 100 812 356 538 384z" fill-opacity=".13" />
                <path d="M163 95L437 67V100L163 128zM538 352L812 323v33L538 384z" fill-opacity=".1" />
                <path d="M163 95L538 352v32L163 128z" fill-opacity=".14" />
                <path d="M287 115L661 373v244L287 359z" fill-opacity=".24" />
                <path d="M313 112L690 370v244l-29 3V373z" fill-opacity=".05" />
                <path d="M661 373l29-3v244l-29 3z" fill-opacity=".22" />
                <path d="M287 359l374 258 29-3L313 356z" fill-opacity=".05" />
              </g>
              <path d="M405 262L680 232v33l-120 15v243l-30 3V285l-125 10z" fill="#606060" fill-opacity=".7" />
              <path d="M495 252L680 232v33l-120 15v10z" fill="#606060" fill-opacity=".8" />
              <g fill="none" stroke="#606060" stroke-width="3">
                <path d="M163 95L437 67 812 323 538 352zM163 128L287 115M313 112L437 100 812 356 690 370M661 373L538 384 163 128M163 95v33M437 67v33M812 323v33M538 352v32" />
                <path d="M287 115v244L661 617V373zM313 112v244L690 614V370zM287 359l26-3M661 617l29-3" />
              </g>
              <g fill="none" stroke="#00a0e0" stroke-width="6">
                <path d="M438 324v502l39 40 68 32 55 7V440M477 353v513M519 383v502M559 410v490" />
              </g>
              <path d="M437 324L600 437" stroke="#222" stroke-width="4" />
              <path d="M545 534v364" stroke="#222" stroke-width="5" stroke-dasharray="22 21" />
              <circle cx="545" cy="898" r="8" fill="#303030" />
              <path d="M431 318h12v12h-12zM594 434h12v13h-12z" fill="#e81c24" />
            </svg>
          </div>
        </div>
        <div class="footer">
          <button type="button" class="square" aria-label="Ajuda"><svg viewBox="0 0 18 18" v-html="icons.help"></svg></button>
          <button type="button" class="push default">OK</button>
          <button type="button" class="push">Cancelar</button>
        </div>
      </section>
    </main>
  </div>
</template>

<style>
html,
body,
#app {
  height: 100%;
}
body {
  overflow: hidden;
}
</style>

<style scoped>
.app {
  display: flex;
  flex-direction: column;
  height: 100%;
  background: #fff;
  color: #000;
  font: 11px/16px Roboto, "Noto Sans", sans-serif;
}
.app *,
.app *::before,
.app *::after {
  box-sizing: border-box;
}
button,
input,
select {
  margin: 0;
  padding: 0;
  border: 0;
  border-radius: 0;
  background: none;
  color: inherit;
  font: inherit;
}
select {
  appearance: none;
}
.titlebar {
  display: flex;
  align-items: center;
  gap: 5px;
  height: 23px;
  padding-left: 2px;
  color: #8c8c8c;
  font-size: 12px;
}
.logo {
  width: 16px;
  height: 16px;
}
.menubar {
  display: flex;
  align-items: center;
  gap: 13px;
  height: 24px;
  background: #cfd3dc;
  color: #3c3c44;
  font-size: 12px;
}
.menubar button {
  white-space: nowrap;
}
.menubar .grip {
  margin: 0 -9px 0 4px;
}
.doc {
  width: 16px;
  height: 13px;
  margin-right: -3px;
}
.grip {
  width: 2px;
  height: 14px;
  margin: 0 4px;
  background: repeating-linear-gradient(#a8aebb 0 2px, transparent 2px 4px);
}
.toolbars {
  display: flex;
  flex-direction: column;
  gap: 1px;
  padding-top: 1px;
  border-bottom: 2px solid #707070;
  background: #cfd3dc;
}
.toolrow {
  display: flex;
  gap: 2px;
}
.toolgroup {
  display: flex;
  align-items: center;
  height: 25px;
  border-bottom: 1px solid #b4bac6;
  border-radius: 0 3px 3px 0;
  background: linear-gradient(#ecf0f8, #d4d9e5);
}
.sep {
  width: 8px;
  height: 14px;
  background: linear-gradient(90deg, transparent 3px, #a0a8b8 3px 4px, #fff 4px 5px, transparent 5px);
}
.tool {
  display: flex;
  align-items: center;
  justify-content: center;
  width: 22px;
  height: 22px;
}
.tool svg,
.square svg {
  display: block;
  flex: none;
  width: 18px;
  height: 18px;
}
.tool.menu {
  justify-content: space-between;
  width: 35px;
  padding: 0 3px 0 4px;
}
.tool i,
.combo i {
  border: 3px solid transparent;
  border-top-color: #6c7078;
  border-bottom: 0;
}
.tool.active {
  border: 1px solid #c09850;
  background: linear-gradient(#fce0a8, #fbb650);
}
.combo {
  position: relative;
  width: 216px;
  height: 19px;
  margin: 0 2px;
}
.combo select {
  width: 100%;
  height: 100%;
  padding-left: 3px;
  background: linear-gradient(90deg, #fff 201px, #dde1ea 201px 214px, #fff 214px);
  font-family: "Open Sans", sans-serif;
  line-height: 19px;
}
.combo i {
  position: absolute;
  top: 8px;
  right: 5px;
}
.canvas {
  position: relative;
  flex: 1;
  min-height: 0;
  overflow: hidden;
  border-left: 2px solid #808080;
  background: #fff;
}
.case {
  position: absolute;
  top: 4px;
  left: 4px;
  font-family: "Liberation Sans", sans-serif;
}
.model {
  display: block;
  width: 100%;
}
.window {
  position: absolute;
  display: flex;
  flex-direction: column;
  border: 1px solid #707070;
  background: #f0f0f0;
  box-shadow: 0 4px 14px rgba(0, 0, 0, 0.42);
}
.back {
  top: 140px;
  left: 401px;
  width: 622px;
  padding-bottom: 7px;
  border-color: #a0a0a0;
}
.front {
  top: 254px;
  left: 255px;
  width: 692px;
}
.caption {
  display: flex;
  align-items: center;
  justify-content: space-between;
  height: 24px;
  padding: 0 10px 0 3px;
  background: #fff;
  font-family: "Open Sans", sans-serif;
}
.back .caption {
  color: #8c8c8c;
}
.close {
  width: 11px;
  height: 11px;
}
.close svg {
  display: block;
}
.tabs {
  display: flex;
  align-items: flex-end;
  margin: 7px 6px 0;
}
.tabs button {
  height: 18px;
  padding: 0 4px;
  border: 1px solid #dcdcdc;
  border-left: 0;
  border-bottom: 0;
  white-space: nowrap;
}
.tabs .selected {
  height: 22px;
  margin-bottom: -1px;
  padding: 0 11px 2px 7px;
  border-left: 1px solid #dcdcdc;
  background: #fff;
}
.pane {
  display: flex;
  flex-direction: column;
  gap: 9px;
  margin: 0 7px 0 6px;
  padding: 9px 6px 9px 8px;
  border: 1px solid #dcdcdc;
  background: #fff;
}
.heads {
  display: grid;
  grid-template-columns: 109px 182px 1fr;
  gap: 8px;
}
.group {
  border: 1px solid #a8a8ec;
  border-top: 0;
  border-left-color: #dce6f4;
  background: #f0f4fa;
  clip-path: polygon(0 0, calc(100% - 10px) 0, 100% 10px, 100% 100%, 0 100%);
}
.head {
  display: block;
  height: 17px;
  padding-left: 1px;
  border-bottom: 1px solid #fff;
  background: #dce6f4;
  color: #1c4272;
  font-family: "Liberation Sans", sans-serif;
}
.line {
  display: flex;
  gap: 4px;
  padding: 3px 2px 4px;
}
.number {
  width: 46px;
  height: 20px;
  padding-right: 3px;
  border: 1px solid #707070;
  outline: 1px solid #fff;
  outline-offset: -2px;
  background: #f0f0f0;
  text-align: right;
}
.drop {
  position: relative;
  display: block;
}
.drop select {
  width: 100%;
  height: 21px;
  padding-left: 5px;
  border: 1px solid #707070;
  background: #fff;
}
.drop::after {
  content: "";
  position: absolute;
  top: 6px;
  right: 6px;
  width: 6px;
  height: 6px;
  border: solid #404040;
  border-width: 0 1px 1px 0;
  transform: rotate(45deg);
  pointer-events: none;
}
.short {
  width: 63px;
}
.short select {
  padding-left: 2px;
}
.swatch {
  width: 218px;
}
.swatch select {
  padding-left: 20px;
}
.swatch::before {
  content: "";
  position: absolute;
  top: 4px;
  left: 3px;
  width: 13px;
  height: 13px;
  border: 1px solid #504840;
  background: #e8782c;
}
.square {
  display: flex;
  align-items: center;
  justify-content: center;
  width: 25px;
  height: 21px;
  border: 1px solid #adadad;
  background: #e1e1e1;
}
.square:disabled {
  border-color: #bfbfbf;
  background: #ccc;
}
.square:disabled svg {
  filter: grayscale(1);
  opacity: 0.45;
}
.preview {
  height: 203px;
  border-top: 1px solid #a0a0a0;
  background: linear-gradient(195deg, #fff7e2, #fffdf4 85%);
}
.side {
  height: 70px;
}
.pairs {
  display: grid;
  grid-template-columns: 25px 25px;
  gap: 3px 5px;
  justify-content: end;
  padding: 3px 3px 0 0;
}
.actions {
  display: flex;
  justify-content: flex-end;
  padding: 10px 7px 0 0;
}
.push {
  width: 73px;
  height: 21px;
  border: 1px solid #adadad;
  background: #e1e1e1;
}
.default {
  border: 2px solid #0078d7;
}
.content {
  display: grid;
  grid-template-columns: 352px 1fr;
  gap: 8px;
  margin: 9px 7px 0 8px;
  padding-bottom: 8px;
  border-bottom: 1px solid #a0a0a0;
  box-shadow: 0 1px #fff;
}
.forms {
  display: flex;
  flex-direction: column;
  gap: 9px;
}
.integrate {
  padding-bottom: 10px;
}
.mode {
  margin-top: 18px;
}
.head + .mode {
  margin-top: 8px;
}
.choice {
  display: flex;
  align-items: center;
  gap: 2px;
  height: 16px;
  padding-left: 2px;
}
.choice input {
  appearance: none;
  width: 13px;
  height: 13px;
  border: 1px solid #333;
  border-radius: 50%;
  background: #fff;
}
.choice input:checked {
  background: radial-gradient(circle, #222 0 3px, #fff 4px);
}
.fields {
  display: grid;
  grid-template-columns: 171px 1fr;
  margin: 3px 0 0 18px;
  color: #a0a0a0;
  text-shadow: 1px 1px #fff;
}
.field {
  display: grid;
  grid-template-columns: 26px 83px auto;
  align-items: center;
  justify-content: start;
}
.field > span:last-child {
  margin-left: 5px;
}
.spin {
  display: flex;
  height: 20px;
  border: 1px solid #7f9db9;
  background: #fff;
}
.spin input {
  flex: 1;
  min-width: 0;
  margin: 1px 0 1px 1px;
  background: #f0f0f0;
}
.steps {
  display: flex;
  flex-direction: column;
}
.steps button,
.more {
  display: flex;
  flex: 1;
  align-items: center;
  justify-content: center;
  width: 13px;
  border: 1px solid #dcdcdc;
  background: #f0f0f0;
}
.spin .more {
  flex: none;
  width: 10px;
  margin: 1px;
}
.spin i {
  border: 3px solid transparent;
}
.spin .up {
  border-top: 0;
  border-bottom-color: #606060;
}
.spin .dn {
  border-bottom: 0;
  border-top-color: #606060;
}
.spin .rt {
  border-right: 0;
  border-left-color: #606060;
}
.rows {
  display: grid;
  grid-template-columns: 59px 1fr 25px;
  align-items: center;
  row-gap: 2px;
  padding: 5px 3px 5px 1px;
}
.rows .no {
  grid-column: 2 / 4;
  height: 17px;
}
.rows input,
.rows .drop {
  margin-right: 5px;
}
.rows input {
  align-self: start;
  height: 20px;
  padding: 0 4px;
  border: 1px solid #707070;
  background: #fff;
}
.picture {
  display: flex;
  border: 1px solid #fff;
  border-top-color: #a0a0a0;
  border-left-color: #a0a0a0;
  background: linear-gradient(195deg, #fff5de, #fffce9 35%, #fffefa 90%);
}
.picture svg {
  width: 100%;
}
.footer {
  display: flex;
  gap: 10px;
  padding: 12px 8px 9px 9px;
}
.footer .square {
  margin-right: auto;
}
</style>
